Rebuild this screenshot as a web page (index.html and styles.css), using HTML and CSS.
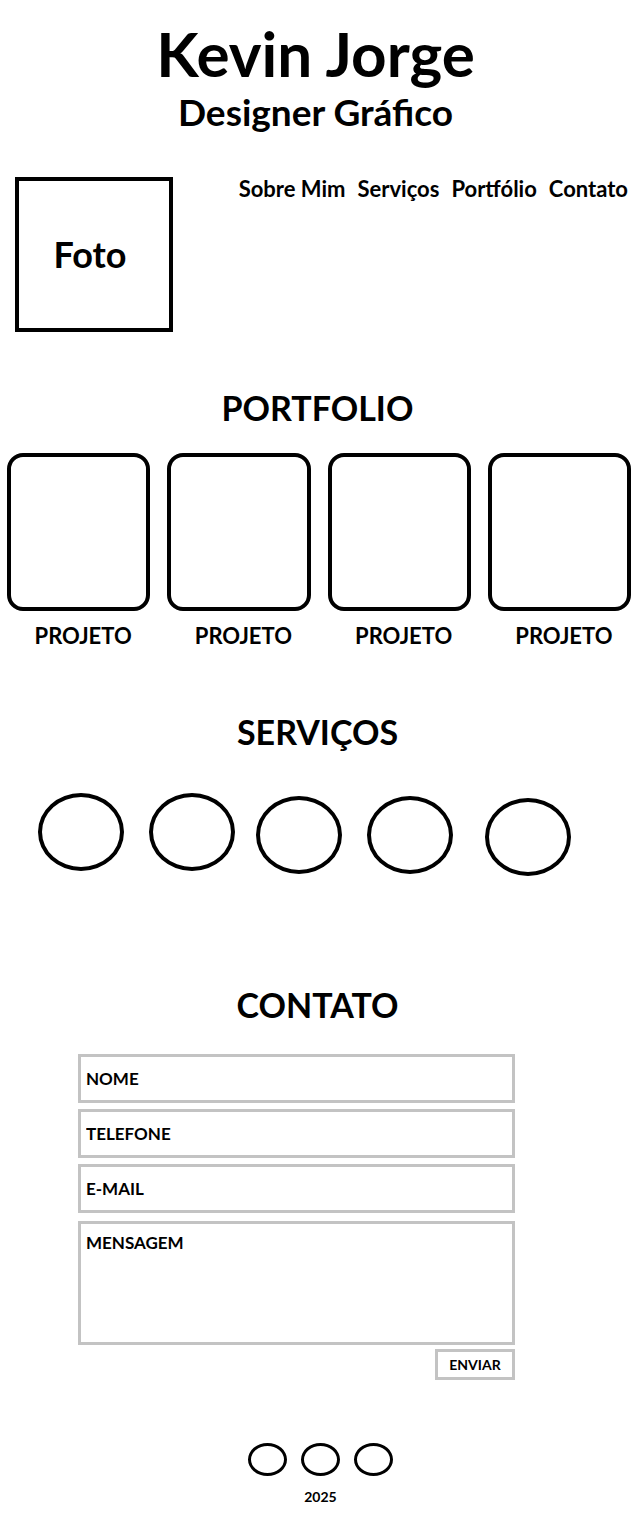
FILE: index.html
```html
<!DOCTYPE html>
<html lang="pt-BR">
<head>
    <meta charset="UTF-8">
    <meta name="viewport" content="width=device-width, initial-scale=1.0">
    <title>Kevin Jorge - Designer Gráfico</title>
    <link rel="stylesheet" href="styles.css">
</head>
<body>
    <!-- Cabeçalho -->
    <header class="topo">
        <h1>Kevin Jorge</h1>
        <p class="cargo">Designer Gráfico</p>
    </header>

    <!-- Foto e menu -->
    <div class="perfil">
        <div class="foto">Foto</div>
        <nav class="menu">
            <a href="#sobre">Sobre Mim</a>
            <a href="#servicos">Serviços</a>
            <a href="#portfolio">Portfólio</a>
            <a href="#contato">Contato</a>
        </nav>
    </div>

    <!-- Portfolio -->
    <section class="portfolio" id="portfolio">
        <h2>PORTFOLIO</h2>
        <div class="projetos">
            <div class="projeto"><div class="quadro"></div><span>PROJETO</span></div>
            <div class="projeto"><div class="quadro"></div><span>PROJETO</span></div>
            <div class="projeto"><div class="quadro"></div><span>PROJETO</span></div>
            <div class="projeto"><div class="quadro"></div><span>PROJETO</span></div>
        </div>
    </section>

    <!-- Serviços -->
    <section class="servicos" id="servicos">
        <h2>SERVIÇOS</h2>
        <div class="circulos">
            <div class="circulo"></div>
            <div class="circulo"></div>
            <div class="circulo"></div>
            <div class="circulo"></div>
            <div class="circulo"></div>
        </div>
    </section>

    <!-- Contato -->
    <section class="contato" id="contato">
        <h2>CONTATO</h2>
        <form class="form-contato">
            <input type="text" placeholder="NOME">
            <input type="text" placeholder="TELEFONE">
            <input type="email" placeholder="E-MAIL">
            <textarea placeholder="MENSAGEM"></textarea>
            <button type="submit">ENVIAR</button>
        </form>
    </section>

    <!-- Rodapé -->
    <footer class="rodape">
        <div class="redes">
            <span class="rede"></span>
            <span class="rede"></span>
            <span class="rede"></span>
        </div>
        <p>2025</p>
    </footer>
</body>
</html>
```

FILE: styles.css
```css
body, h1, h2, p, div, nav, span, form, input, textarea, button, section, header, footer {
    margin: 0;
    padding: 0;
    box-sizing: border-box;
}

body {
    font-family: 'Lato', 'Open Sans', sans-serif;
    font-weight: bold;
    color: #000;
    background-color: #fff;
}

/* Cabeçalho */
.topo {
    text-align: center;
    padding-top: 23px;
}

.topo h1 {
    font-size: 62px;
    line-height: 61px;
    padding-right: 10px;
}

.cargo {
    font-size: 37px;
    line-height: 40px;
    margin-top: 8px;
    padding-right: 10px;
}

/* Foto e menu */
.perfil {
    display: flex;
    justify-content: space-between;
    align-items: flex-start;
    padding: 0 13px 0 15px;
    margin-top: 45px;
}

.foto {
    width: 158px;
    height: 155px;
    border: 4px solid #000;
    display: flex;
    align-items: center;
    justify-content: center;
    font-size: 36px;
    padding: 0 8px 2px 0;
}

.menu {
    display: flex;
    gap: 12px;
}

.menu a {
    color: #000;
    text-decoration: none;
    font-size: 22px;
    line-height: 24px;
}

/* Títulos das seções */
h2 {
    text-align: center;
    font-size: 34px;
    line-height: 40px;
    padding-right: 6px;
}

/* Portfolio */
.portfolio {
    margin-top: 56px;
}

.projetos {
    display: grid;
    grid-template-columns: repeat(4, 1fr);
    gap: 17px;
    padding: 0 10px 0 7px;
    margin-top: 25px;
}

.projeto {
    display: flex;
    flex-direction: column;
    align-items: center;
}

.quadro {
    width: 100%;
    height: 158px;
    border: 4px solid #000;
    border-radius: 16px;
}

.projeto span {
    font-size: 22px;
    line-height: 26px;
    margin-top: 12px;
    padding-left: 9px;
}

/* Serviços */
.servicos {
    margin-top: 63px;
}

.circulos {
    display: flex;
    gap: 24px;
    padding-left: 38px;
    margin-top: 41px;
}

.circulo {
    width: 86px;
    height: 78px;
    border: 4px solid #000;
    border-radius: 50%;
}

.circulo:nth-child(2) {
    margin-left: 1px;
}

.circulo:nth-child(3) {
    margin: 3px 0 0 -3px;
}

.circulo:nth-child(4) {
    margin: 3px 0 0 1px;
}

.circulo:nth-child(5) {
    margin: 5px 0 0 8px;
}

/* Contato */
.contato {
    margin-top: 109px;
}

.form-contato {
    width: 437px;
    margin: 29px 0 0 78px;
    display: flex;
    flex-direction: column;
    gap: 6px;
}

.form-contato input,
.form-contato textarea {
    width: 100%;
    height: 49px;
    border: 3px solid #c3c3c3;
    padding: 0 5px;
    font-family: 'Lato', 'Open Sans', sans-serif;
    font-weight: bold;
    font-size: 17px;
    outline: none;
}

.form-contato textarea {
    height: 124px;
    padding-top: 8px;
    resize: none;
    margin-top: 2px;
}

.form-contato ::placeholder {
    color: #000;
    opacity: 1;
}

.form-contato button {
    align-self: flex-end;
    width: 80px;
    height: 31px;
    margin-top: -2px;
    border: 3px solid #c3c3c3;
    background-color: #fff;
    font-family: 'Lato', 'Open Sans', sans-serif;
    font-weight: bold;
    font-size: 14px;
    color: #000;
    cursor: pointer;
}

/* Rodapé */
.rodape {
    margin-top: 63px;
    text-align: center;
}

.redes {
    display: flex;
    justify-content: center;
    gap: 14px;
}

.rede {
    width: 39px;
    height: 33px;
    border: 3px solid #000;
    border-radius: 50%;
}

.rodape p {
    font-size: 14px;
    margin-top: 12px;
}
```
